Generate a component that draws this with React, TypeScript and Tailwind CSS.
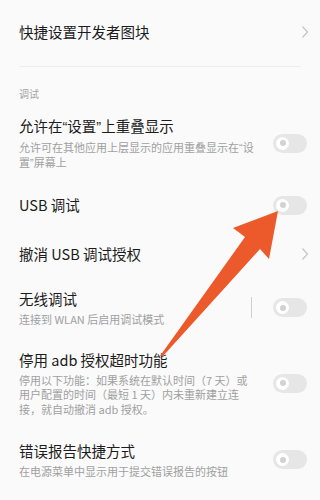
import React from 'react';

const font = { fontFamily: '"Noto Sans CJK SC", "Noto Sans", sans-serif' };

// narrow quotes, the screenshot's font draws them half-width
function Q({ c }: { c: string }) {
  return <span style={{ fontFamily: '"Liberation Sans", sans-serif' }}>{c}</span>;
}

function Toggle() {
  return (
    <div className="relative w-[34px] h-[19px] rounded-full bg-[#e6e6e6] shrink-0">
      <div className="absolute left-[3px] top-[3px] w-[13px] h-[13px] rounded-full bg-white flex items-center justify-center">
        <div className="w-[6px] h-[6px] rounded-full bg-[#d2d2d2]"></div>
      </div>
    </div>
  );
}

function Chevron() {
  return (
    <svg width="8" height="14" viewBox="0 0 8 14" className="shrink-0 mr-[-2px]">
      <polyline points="1.5,1.5 6.5,7 1.5,12.5" fill="none" stroke="#c4c4c4" strokeWidth="1.2" />
    </svg>
  );
}

function Row({
  title,
  sub,
  right,
  height,
}: {
  title: React.ReactNode;
  sub?: React.ReactNode;
  right: React.ReactNode;
  height: string;
}) {
  return (
    <div className={`flex items-center pl-[19px] pr-[13px] ${height}`}>
      <div className="flex-1 min-w-0">
        <div className="text-[14.5px] leading-[20px] text-[#1c1c1c]">{title}</div>
        {sub && (
          <div className="mt-[3px] text-[11px] leading-[14.5px] text-[#a0a0a0]">{sub}</div>
        )}
      </div>
      {right}
    </div>
  );
}

export default function App() {
  return (
    <div className="relative w-[320px] h-[500px] overflow-hidden bg-[#fafafa]" style={font}>
      <div className="flex items-center pl-[19px] pr-[13px] h-[66px] pb-[2px]">
        <div className="flex-1 text-[14.5px] leading-[20px] text-[#1c1c1c]">快捷设置开发者图块</div>
        <Chevron />
      </div>
      <div className="mx-[19px] border-t border-[#ededed]"></div>

      <div className="pl-[19px] pt-[20px] text-[10px] leading-[14px] text-[#a3a3a3]">调试</div>

      <Row
        height="h-[84px]"
        title={
          <>
            允许在<Q c="“" />设置<Q c="”" />上重叠显示
          </>
        }
        sub={
          <>
            允许可在其他应用上层显示的应用重叠显示在<Q c="“" />设
            <br />
            置<Q c="”" />屏幕上
          </>
        }
        right={<Toggle />}
      />
      <Row height="h-[40px]" title="USB 调试" right={<Toggle />} />
      <Row height="h-[58px]" title="撤消 USB 调试授权" right={<Chevron />} />
      <Row
        height="h-[49px]"
        title="无线调试"
        sub="连接到 WLAN 后启用调试模式"
        right={
          <div className="flex items-center">
            <div className="w-px h-[21px] bg-[#cfcfcf] mr-[21px]"></div>
            <Toggle />
          </div>
        }
      />
      <Row
        height="h-[102px]"
        title="停用 adb 授权超时功能"
        sub={
          <>
            停用以下功能：如果系统在默认时间（7 天）或
            <br />
            用户配置的时间（最短 1 天）内未重新建立连
            <br />
            接，就自动撤消 adb 授权。
          </>
        }
        right={<Toggle />}
      />
      <Row
        height="h-[51px]"
        title="错误报告快捷方式"
        sub="在电源菜单中显示用于提交错误报告的按钮"
        right={<Toggle />}
      />

      <svg className="absolute left-0 top-0 pointer-events-none" width="320" height="500" viewBox="0 0 320 500">
        <polygon
          points="278,211 233,228 245,237 160,356 163,356 260,249 269,259"
          fill="#ec5a2b"
        />
      </svg>
    </div>
  );
}
